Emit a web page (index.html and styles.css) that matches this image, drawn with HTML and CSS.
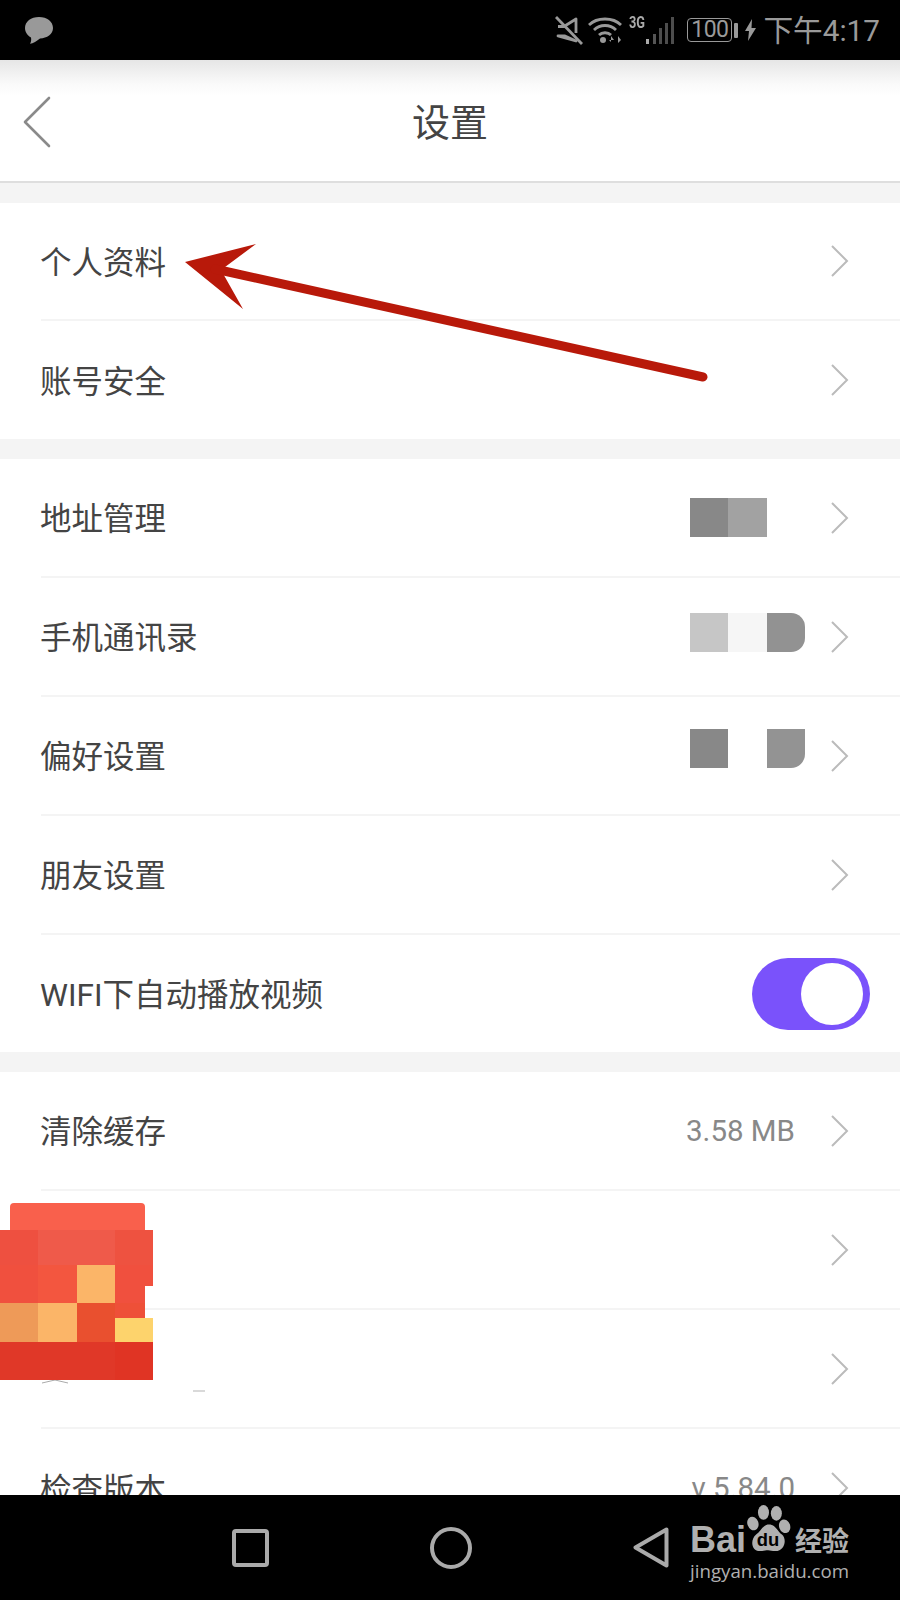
FILE: index.html
```html
<!DOCTYPE html>
<html lang="zh-CN">
<head>
    <meta charset="UTF-8">
    <meta name="viewport" content="width=device-width, initial-scale=1.0">
    <title>设置</title>
    <link rel="stylesheet" href="styles.css">
</head>
<body>
    <div class="status-bar">
        <svg class="bubble" width="28" height="27" viewBox="0 0 28 27">
            <path d="M14 0C22 0 28 4.500 28 11C28 17.500 22 21 15 21.500C12 24 8 26.500 5 26.800C6 25 6.500 23 6 20.500C2.500 18.500 0 15 0 11C0 4.500 6 0 14 0Z" fill="#999"/>
        </svg>
        <div class="status-right">
            <svg class="mute" width="28" height="29" viewBox="0 0 28 29">
                <path d="M3 10.500H9L21 3V17M21 25L10 20H3Z" fill="none" stroke="#999" stroke-width="2.800" stroke-linejoin="round"/>
                <path d="M1 1L27 28" stroke="#999" stroke-width="2.800"/>
            </svg>
            <svg class="wifi" width="34" height="28" viewBox="0 0 34 28">
                <path d="M1 9C9 1 25 1 33 9M6 14C12 8 22 8 28 14M11 19C14 16 20 16 23 19" fill="none" stroke="#999" stroke-width="2.800"/>
                <circle cx="15" cy="24" r="3" fill="#999"/>
                <path d="M23 26V20L26 24H21M30 20V27L33 24Z" fill="#999"/>
            </svg>
            <div class="net">
                <span class="net-label">3G</span>
                <svg width="30" height="28" viewBox="0 0 30 28">
                    <rect x="1" y="23" width="3" height="5" fill="#aaa"/>
                    <rect x="8" y="18" width="3" height="10" fill="#555"/>
                    <rect x="14" y="12" width="3" height="16" fill="#4d4d4d"/>
                    <rect x="20" y="7" width="3" height="21" fill="#4d4d4d"/>
                    <rect x="26" y="1" width="3" height="27" fill="#4d4d4d"/>
                </svg>
            </div>
            <div class="battery">100</div>
            <div class="battery-cap"></div>
            <svg class="bolt" width="11" height="22" viewBox="0 0 11 22">
                <path d="M7 0L0 12H4L3 22L11 9H6.500Z" fill="#999"/>
            </svg>
            <span class="clock">下午4:17</span>
        </div>
    </div>

    <div class="header">
        <svg class="back" width="28" height="52" viewBox="0 0 28 52">
            <path d="M26 2L2 26L26 50" fill="none" stroke="#8a8a8a" stroke-width="2.600" stroke-linecap="round" stroke-linejoin="round"/>
        </svg>
        <h1>设置</h1>
    </div>

    <div class="content">
        <div class="group group-first">
            <div class="row">
                <span class="label">个人资料</span>
                <svg class="chevron" width="18" height="32" viewBox="0 0 18 32"><path d="M1 1L16 16L1 31" fill="none" stroke="#bbb" stroke-width="2"/></svg>
            </div>
            <div class="row">
                <span class="label">账号安全</span>
                <svg class="chevron" width="18" height="32" viewBox="0 0 18 32"><path d="M1 1L16 16L1 31" fill="none" stroke="#bbb" stroke-width="2"/></svg>
            </div>
        </div>

        <div class="group">
            <div class="row">
                <span class="label">地址管理</span>
                <div class="mosaic">
                    <i class="c-a"></i><i class="c-b"></i><i></i>
                </div>
                <svg class="chevron" width="18" height="32" viewBox="0 0 18 32"><path d="M1 1L16 16L1 31" fill="none" stroke="#bbb" stroke-width="2"/></svg>
            </div>
            <div class="row">
                <span class="label">手机通讯录</span>
                <div class="mosaic mosaic-up">
                    <i class="c-c"></i><i class="c-d"></i><i class="c-e"></i>
                </div>
                <svg class="chevron" width="18" height="32" viewBox="0 0 18 32"><path d="M1 1L16 16L1 31" fill="none" stroke="#bbb" stroke-width="2"/></svg>
            </div>
            <div class="row">
                <span class="label">偏好设置</span>
                <div class="mosaic mosaic-up2">
                    <i class="c-a"></i><i></i><i class="c-f"></i>
                </div>
                <svg class="chevron" width="18" height="32" viewBox="0 0 18 32"><path d="M1 1L16 16L1 31" fill="none" stroke="#bbb" stroke-width="2"/></svg>
            </div>
            <div class="row">
                <span class="label">朋友设置</span>
                <svg class="chevron" width="18" height="32" viewBox="0 0 18 32"><path d="M1 1L16 16L1 31" fill="none" stroke="#bbb" stroke-width="2"/></svg>
            </div>
            <div class="row row-toggle">
                <span class="label">WIFI下自动播放视频</span>
                <div class="toggle"><div class="knob"></div></div>
            </div>
        </div>

        <div class="group">
            <div class="row">
                <span class="label">清除缓存</span>
                <span class="value">3.58 MB</span>
                <svg class="chevron" width="18" height="32" viewBox="0 0 18 32"><path d="M1 1L16 16L1 31" fill="none" stroke="#bbb" stroke-width="2"/></svg>
            </div>
            <div class="row">
                <svg class="chevron" width="18" height="32" viewBox="0 0 18 32"><path d="M1 1L16 16L1 31" fill="none" stroke="#bbb" stroke-width="2"/></svg>
            </div>
            <div class="row">
                <svg class="chevron" width="18" height="32" viewBox="0 0 18 32"><path d="M1 1L16 16L1 31" fill="none" stroke="#bbb" stroke-width="2"/></svg>
            </div>
            <div class="row">
                <span class="label">检查版本</span>
                <span class="value">v 5.84.0</span>
                <svg class="chevron" width="18" height="32" viewBox="0 0 18 32"><path d="M1 1L16 16L1 31" fill="none" stroke="#bbb" stroke-width="2"/></svg>
            </div>
        </div>
    </div>

    <!-- red marker arrow drawn over the list -->
    <svg class="arrow" width="900" height="400" viewBox="0 0 900 400">
        <path d="M185 262L256 244L221 270L243 309Z" fill="#b8190a"/>
        <path d="M215 269L703 377" stroke="#b8190a" stroke-width="9" stroke-linecap="round"/>
    </svg>

    <!-- blurred red sticker -->
    <div class="sticker">
        <div class="sticker-top"></div>
        <div class="sticker-grid">
            <i class="s1"></i><i class="s2"></i><i class="s2"></i><i class="s3"></i>
            <i class="s4"></i><i class="s5"></i><i class="s6"></i><i class="s4"></i>
            <i class="s7"></i><i class="s6"></i><i class="s8"></i><i class="s9"></i>
            <i class="s10"></i><i class="s10"></i><i class="s10"></i><i class="s11"></i>
        </div>
        <svg class="sticker-rest" width="210" height="14" viewBox="0 0 210 14">
            <path d="M42 3L55 0L68 3" fill="none" stroke="#aaa" stroke-width="1"/>
            <path d="M193 11H205" stroke="#ccc" stroke-width="1.500"/>
        </svg>
    </div>

    <div class="nav">
        <div class="nav-square"></div>
        <div class="nav-circle"></div>
        <svg width="36" height="41" viewBox="0 0 36 41">
            <path d="M33.500 2.500L2.500 20.500L33.500 38.500Z" fill="none" stroke="#aaa" stroke-width="4" stroke-linejoin="round"/>
        </svg>

        <div class="watermark">
            <div class="wm-top">
                <span class="wm-bai">Bai</span>
                <svg class="paw" width="46" height="48" viewBox="0 0 50 52">
                    <ellipse cx="19" cy="8" rx="6" ry="8" fill="#b0b0b0"/>
                    <ellipse cx="33" cy="9" rx="6" ry="8" fill="#b0b0b0"/>
                    <ellipse cx="7.500" cy="20" rx="6" ry="7.500" fill="#b0b0b0" transform="rotate(-20 7.500 20)"/>
                    <ellipse cx="42" cy="23" rx="6" ry="7.500" fill="#b0b0b0" transform="rotate(-20 42 23)"/>
                    <path d="M25 21C32 21 34 28 39 32C45 37 42 50 32 50C28 50 27 49 24 49C21 49 19 50 15 50C6 50 4 38 11 32C17 28 18 21 25 21Z" fill="#b0b0b0"/>
                    <text x="24" y="45" text-anchor="middle" class="paw-du">du</text>
                </svg>
                <span class="wm-cn">经验</span>
            </div>
            <div class="wm-url">jingyan.baidu.com</div>
        </div>
    </div>
</body>
</html>
```

FILE: styles.css
```css
* {
    box-sizing: border-box;
}
html, body {
    margin: 0;
    height: 1600px;
}
body {
    font-family: Roboto, "Noto Sans CJK SC", sans-serif;
    background: #f4f4f4;
    display: flex;
    flex-direction: column;
    position: relative;
    overflow: hidden;
}

/* status bar */
.status-bar {
    height: 60px;
    flex: none;
    background: #000;
    color: #9a9a9a;
    display: flex;
    justify-content: space-between;
    align-items: center;
    padding: 0 20px 0 25px;
}
.bubble {
    margin-top: 1px;
}
.status-right {
    display: flex;
    align-items: center;
}
.mute {
    margin-right: 5px;
}
.wifi {
    margin-right: 7px;
}
.net {
    position: relative;
    width: 46px;
    height: 28px;
    display: flex;
    justify-content: flex-end;
    margin-right: 12px;
}
.net-label {
    position: absolute;
    left: 0;
    top: 0;
    font-size: 16px;
    line-height: 14px;
    font-weight: 700;
    color: #aaa;
    transform: scaleX(0.8);
    transform-origin: left top;
}
.battery {
    width: 45px;
    height: 24px;
    border: 1.500px solid #999;
    border-radius: 4px;
    font-size: 23px;
    line-height: 21px;
    text-align: center;
    letter-spacing: -0.500px;
}
.battery-cap {
    width: 4px;
    height: 15px;
    background: #999;
    border-radius: 1px;
    margin: 0 7px 0 2px;
}
.bolt {
    margin-right: 7px;
}
.clock {
    font-size: 29.700px;
    line-height: 36px;
    margin-top: 2px;
}

/* header */
.header {
    height: 123px;
    flex: none;
    background: linear-gradient(#e6e6e6, #fafafa 24px, #fff 36px);
    border-bottom: 2px solid #dedede;
    display: flex;
    align-items: center;
    justify-content: center;
    position: relative;
}
.header h1 {
    margin: 0 0 3px;
    font-size: 38px;
    font-weight: 400;
    color: #444;
}
.back {
    position: absolute;
    left: 23px;
    top: 36px;
}

/* list */
.content {
    flex: 1;
    min-height: 0;
    overflow: hidden;
    padding-top: 20px;
}
.group {
    background: #fff;
    padding-left: 41px;
    margin-bottom: 20px;
}
.row {
    height: 119px;
    display: flex;
    align-items: center;
    padding-right: 30px;
    border-bottom: 2px solid #f4f4f4;
}
.group-first .row {
    height: 118px;
}
.row:last-child {
    height: 118px;
    border-bottom: none;
}
.row.row-toggle {
    height: 117px;
}
.label {
    font-size: 31.500px;
    color: #444;
    margin-right: auto;
    margin-bottom: 3px;
    margin-left: -1px;
}
.value {
    font-size: 29.500px;
    color: #888;
    margin-right: 36px;
}
.chevron {
    flex: none;
    margin-left: auto;
    margin-right: 21px;
}
.label + .chevron, .label + .mosaic, .label + .value {
    margin-left: 0;
}
.value + .chevron, .mosaic + .chevron {
    margin-left: 0;
}

/* blurred-out values */
.mosaic {
    display: flex;
    margin-right: 26px;
    margin-bottom: 1px;
    filter: blur(0.5px);
}
.mosaic i {
    display: block;
    width: 38.500px;
    height: 39px;
}
.mosaic-up {
    margin-bottom: 9px;
}
.mosaic-up2 {
    margin-bottom: 15px;
}
.c-a { background: #888; }
.c-b { background: #a2a2a2; }
.c-c { background: #c6c6c6; }
.c-d { background: #f6f6f6; }
.c-e {
    background: #929292;
    border-radius: 0 14px 14px 0;
}
.c-f {
    background: #939393;
    border-radius: 0 0 14px 0;
}

/* toggle */
.toggle {
    width: 118px;
    height: 72px;
    border-radius: 36px;
    background: #7a52fb;
    padding: 5px 7px;
    display: flex;
    justify-content: flex-end;
}
.knob {
    width: 62px;
    height: 62px;
    border-radius: 50%;
    background: #fff;
}

/* overlays */
.arrow {
    position: absolute;
    left: 0;
    top: 0;
}
.sticker {
    position: absolute;
    left: 0;
    top: 1203px;
    width: 153px;
}
.sticker-top {
    width: 135px;
    height: 27px;
    margin-left: 10px;
    background: #f9604c;
    border-radius: 4px 4px 0 0;
}
.sticker-grid {
    display: grid;
    grid-template-columns: repeat(4, 38.250px);
    grid-template-rows: 35px 38px 39px 38px;
    clip-path: polygon(0 0, 100% 0, 100% 56px, 145px 56px, 145px 88px, 100% 88px, 100% 100%, 0 100%);
}
.sticker-rest {
    display: block;
}
.s1 { background: #ee5040; }
.s2 { background: #ef5a4a; }
.s3 { background: #ee5240; }
.s4 { background: #f0503e; }
.s5 { background: #f3563f; }
.s6 { background: #fbb568; }
.s7 { background: #ee9a58; }
.s8 { background: #e9502f; }
.s9 { background: linear-gradient(#ee5038 15px, #fdd36c 15px); }
.s10 { background: #e03828; }
.s11 { background: #e03424; }

/* bottom nav */
.nav {
    height: 105px;
    flex: none;
    background: #000;
    display: flex;
    align-items: center;
    justify-content: center;
    gap: 161px;
    position: relative;
    z-index: 1;
}
.nav-square {
    width: 37px;
    height: 38px;
    border: 4px solid #aaa;
    border-radius: 4px;
}
.nav-circle {
    width: 42px;
    height: 42px;
    border: 4px solid #aaa;
    border-radius: 50%;
}
.watermark {
    position: absolute;
    left: 690px;
    top: 0;
    width: 165px;
    color: #b0b0b0;
}
.wm-top {
    display: flex;
    align-items: flex-end;
    height: 58px;
}
.wm-bai {
    font-family: "Liberation Sans", sans-serif;
    font-size: 36px;
    font-weight: 700;
    line-height: 40px;
    margin-bottom: -7px;
}
.paw {
    flex: none;
}
.paw-du {
    font-family: "Liberation Sans", sans-serif;
    font-size: 20px;
    font-weight: 700;
    fill: #000;
}
.wm-cn {
    font-family: "Noto Sans CJK SC", sans-serif;
    font-size: 27px;
    font-weight: 700;
    line-height: 32px;
    margin-left: 3px;
    margin-bottom: -3px;
    white-space: nowrap;
}
.wm-url {
    font-family: "Open Sans", sans-serif;
    font-size: 18.700px;
    line-height: 26px;
    margin-top: 5px;
    white-space: nowrap;
}
```
